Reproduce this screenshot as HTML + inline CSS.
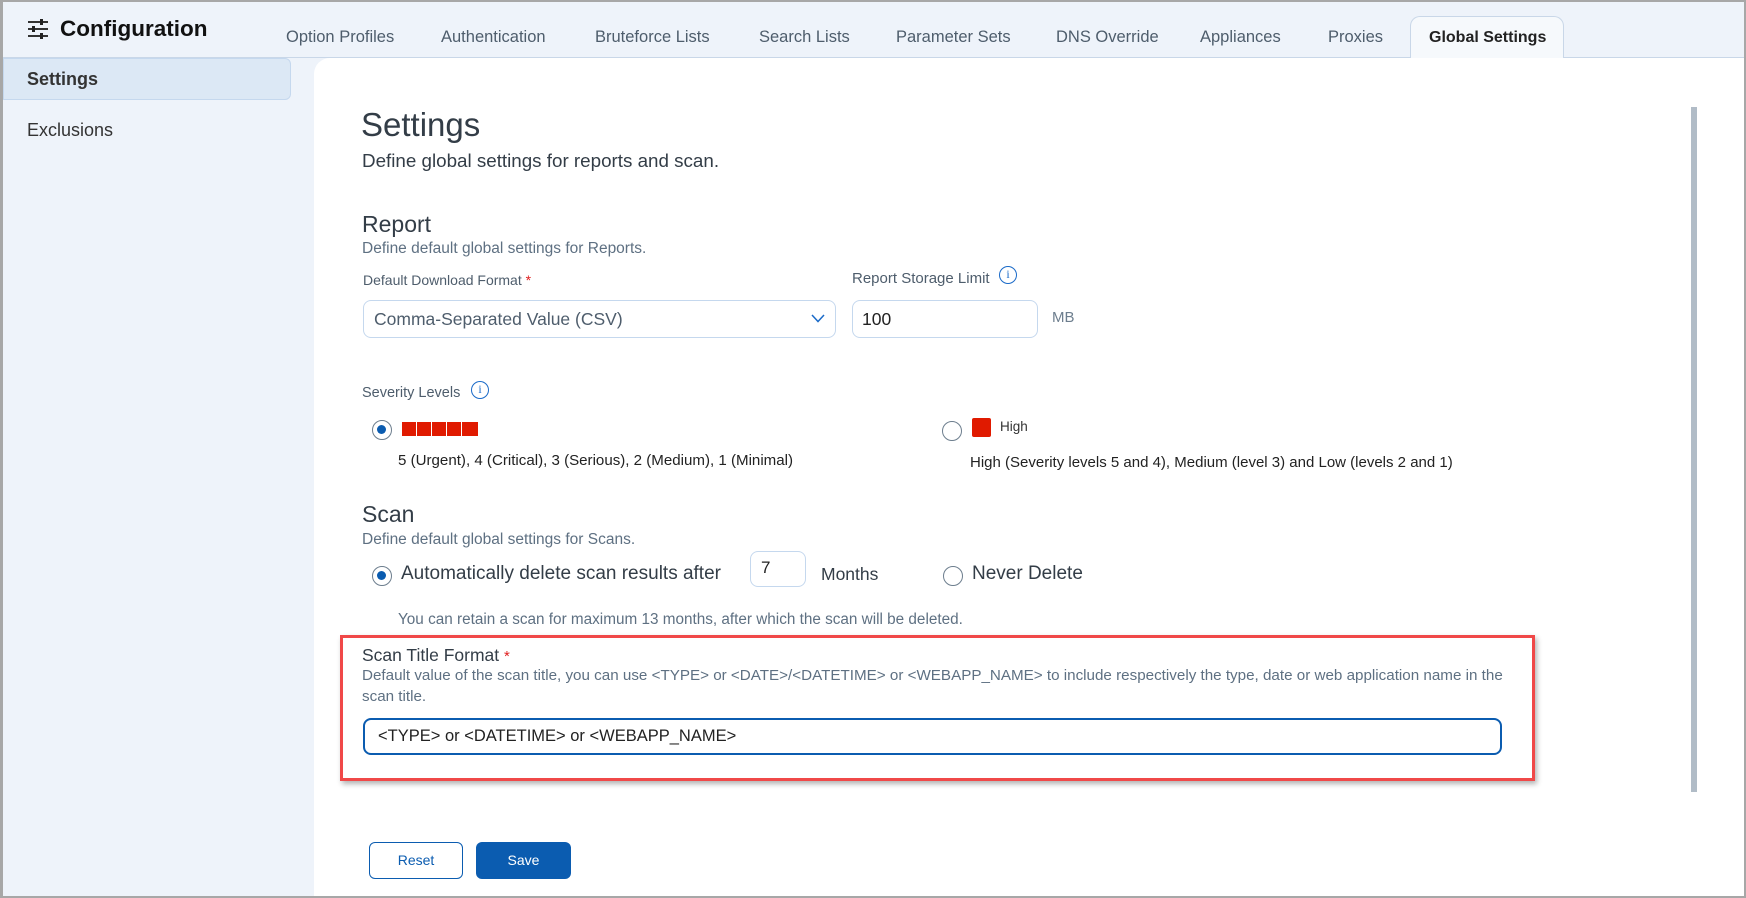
<!DOCTYPE html>
<html><head><meta charset="utf-8"><style>
*{box-sizing:border-box;margin:0;padding:0}
body{width:1746px;height:898px;overflow:hidden;font-family:"Liberation Sans",sans-serif;background:#eef3fa;position:relative;color:#1f2d3d}
.a{position:absolute;white-space:nowrap}
.frame{position:absolute;left:0;top:0;width:1746px;height:898px;border:2px solid #a7a7a7;border-left-width:3px;pointer-events:none}
.top{position:absolute;left:0;top:0;width:1746px;height:58px;background:#eef3fa;border-bottom:1px solid #c9d7e8}
.tab{position:absolute;top:28px;font-size:16.5px;color:#4e5d6c}
.side{position:absolute;left:3px;top:58px;width:288px;height:42px;background:#dce8f5;border:1px solid #c5d8ee;border-radius:0 6px 6px 0}
.panel{position:absolute;left:314px;top:58px;width:1430px;height:838px;background:#fff;border-top-left-radius:16px}
.lbl{font-size:15px;color:#4e5d6c}
.sub{font-size:15.5px;color:#5e7082}
.box{position:absolute;border:1px solid #c5d8ee;border-radius:8px;background:#fff}
.radio{position:absolute;width:20px;height:20px;border:1.5px solid #6d7e8e;border-radius:50%;background:#fff}
.radio.on::after{content:"";position:absolute;left:4px;top:4px;width:9px;height:9px;border-radius:50%;background:#0b5cb0}
.sq{position:absolute;top:422px;width:14px;height:14px;background:#e01a00}
.info{position:absolute;width:18px;height:18px;border:1.5px solid #1a6ac8;border-radius:50%;color:#1a6ac8;font-size:12px;text-align:center;line-height:15px;font-family:"Liberation Serif",serif}
</style></head><body>
<div class="top"></div>
<svg class="a" style="left:27px;top:19px" width="22" height="20" viewBox="0 0 22 20"><g stroke="#333" stroke-width="2"><line x1="1" y1="3" x2="21" y2="3"/><line x1="1" y1="10" x2="21" y2="10"/><line x1="1" y1="17" x2="21" y2="17"/></g><g fill="#222"><rect x="13" y="0" width="3" height="6"/><rect x="5" y="7" width="3" height="6"/><rect x="13" y="14" width="3" height="6"/></g></svg>
<div class="a" style="left:60px;top:16px;font-size:22.5px;font-weight:bold;color:#111">Configuration</div>
<div class="tab a" style="left:286px">Option Profiles</div>
<div class="tab a" style="left:441px">Authentication</div>
<div class="tab a" style="left:595px">Bruteforce Lists</div>
<div class="tab a" style="left:759px">Search Lists</div>
<div class="tab a" style="left:896px">Parameter Sets</div>
<div class="tab a" style="left:1056px">DNS Override</div>
<div class="tab a" style="left:1200px">Appliances</div>
<div class="tab a" style="left:1328px">Proxies</div>
<div class="a" style="left:1410px;top:16px;width:154px;height:43px;background:#f6f9fc;border:1px solid #c9d7e8;border-bottom:none;border-radius:10px 10px 0 0"></div>
<div class="a" style="left:1429px;top:29px;font-size:16px;font-weight:bold;color:#222">Global Settings</div>
<div class="side"></div>
<div class="a" style="left:27px;top:69px;font-size:18px;font-weight:bold;color:#333">Settings</div>
<div class="a" style="left:27px;top:120px;font-size:18px;color:#333">Exclusions</div>
<div class="panel"></div>
<div class="a" style="left:1691px;top:107px;width:6px;height:685px;background:#b1bcc7"></div>

<div class="a" style="left:361px;top:106px;font-size:33px;color:#333d47">Settings</div>
<div class="a" style="left:362px;top:150px;font-size:18.8px;color:#333d47">Define global settings for reports and scan.</div>
<div class="a" style="left:362px;top:211px;font-size:23px;color:#333d47">Report</div>
<div class="a sub" style="left:362px;top:240px">Define default global settings for Reports.</div>
<div class="a lbl" style="left:363px;top:272px;font-size:14px">Default Download Format <span style="color:#e02020">*</span></div>
<div class="a lbl" style="left:852px;top:270px">Report Storage Limit</div>
<div class="info" style="left:999px;top:266px">i</div>
<div class="box" style="left:363px;top:300px;width:473px;height:38px"></div>
<div class="a" style="left:374px;top:309px;font-size:17.5px;color:#4e5d6c">Comma-Separated Value (CSV)</div>
<svg class="a" style="left:811px;top:314px" width="14" height="9" viewBox="0 0 14 9"><path d="M1 1 L7 7.5 L13 1" fill="none" stroke="#1a6ac8" stroke-width="1.5"/></svg>
<div class="box" style="left:852px;top:300px;width:186px;height:38px"></div>
<div class="a" style="left:862px;top:309px;font-size:17.5px;color:#222">100</div>
<div class="a" style="left:1052px;top:309px;font-size:15px;color:#6d7e8e">MB</div>

<div class="a lbl" style="left:362px;top:385px;font-size:14.5px">Severity Levels</div>
<div class="info" style="left:471px;top:381px">i</div>
<div class="radio on" style="left:372px;top:420px"></div>
<div class="sq" style="left:402px"></div><div class="sq" style="left:417px"></div><div class="sq" style="left:432px"></div><div class="sq" style="left:447px"></div><div class="sq" style="left:462px;width:16px"></div>
<div class="a" style="left:398px;top:452px;font-size:15.1px;color:#222">5 (Urgent), 4 (Critical), 3 (Serious), 2 (Medium), 1 (Minimal)</div>
<div class="radio" style="left:942px;top:421px"></div>
<div class="a" style="left:972px;top:418px;width:19px;height:19px;background:#e01a00;border-radius:2px"></div>
<div class="a" style="left:1000px;top:419px;font-size:13.5px;color:#333">High</div>
<div class="a" style="left:970px;top:454px;font-size:15px;color:#222">High (Severity levels 5 and 4), Medium (level 3) and Low (levels 2 and 1)</div>

<div class="a" style="left:362px;top:501px;font-size:23px;color:#333d47">Scan</div>
<div class="a sub" style="left:362px;top:531px">Define default global settings for Scans.</div>
<div class="radio on" style="left:372px;top:566px"></div>
<div class="a" style="left:401px;top:563px;font-size:19px;color:#333d47">Automatically delete scan results after</div>
<div class="box" style="left:750px;top:551px;width:56px;height:36px"></div>
<div class="a" style="left:761px;top:558px;font-size:17px;color:#222">7</div>
<div class="a" style="left:821px;top:564px;font-size:17.5px;color:#333d47">Months</div>
<div class="radio" style="left:943px;top:566px"></div>
<div class="a" style="left:972px;top:563px;font-size:19px;color:#333d47">Never Delete</div>
<div class="a" style="left:398px;top:611px;font-size:15.3px;color:#5e7082">You can retain a scan for maximum 13 months, after which the scan will be deleted.</div>

<div class="a" style="left:340px;top:635px;width:1195px;height:146px;border:3px solid #f04848;box-shadow:2px 3px 5px rgba(0,0,0,.3)"></div>
<div class="a" style="left:362px;top:645px;font-size:17.5px;color:#333d47">Scan Title Format <span style="color:#e02020;font-size:15px">*</span></div>
<div class="a sub" style="left:362px;top:667px;font-size:15.2px">Default value of the scan title, you can use &lt;TYPE&gt; or &lt;DATE&gt;/&lt;DATETIME&gt; or &lt;WEBAPP_NAME&gt; to include respectively the type, date or web application name in the</div>
<div class="a sub" style="left:362px;top:688px;font-size:15.2px">scan title.</div>
<div class="a" style="left:363px;top:718px;width:1139px;height:37px;border:2px solid #0b5cb0;border-radius:8px"></div>
<div class="a" style="left:378px;top:727px;font-size:16.5px;color:#222">&lt;TYPE&gt; or &lt;DATETIME&gt; or &lt;WEBAPP_NAME&gt;</div>

<div class="a" style="left:369px;top:842px;width:94px;height:37px;border:1px solid #0b5cb0;border-radius:6px;text-align:center;line-height:35px;font-size:14px;color:#0b5cb0">Reset</div>
<div class="a" style="left:476px;top:842px;width:95px;height:37px;background:#0b5cb0;border-radius:6px;text-align:center;line-height:37px;font-size:14px;color:#fff">Save</div>
<div class="frame"></div>
</body></html>
